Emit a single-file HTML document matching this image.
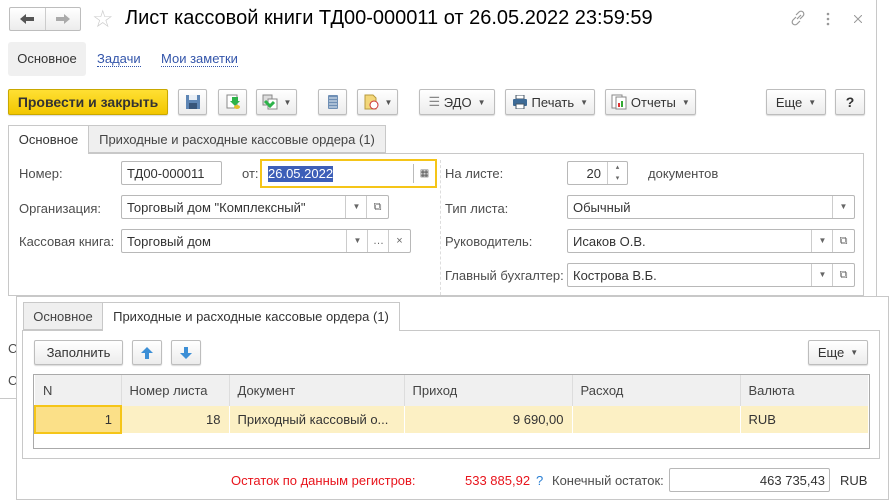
<!DOCTYPE html>
<html><head><meta charset="utf-8"><style>
*{box-sizing:border-box;margin:0;padding:0}
body{width:890px;height:502px;position:relative;overflow:hidden;background:#fff;font-family:"Liberation Sans",sans-serif;font-size:13px;color:#333}
.a{position:absolute}
.btn{position:absolute;height:25px;border:1px solid #bdbdbd;border-radius:2px;background:linear-gradient(#fff,#ececec);box-shadow:0 1px 1px rgba(0,0,0,.15);font-size:13px;color:#333;display:flex;align-items:center;justify-content:center}
.inp{position:absolute;height:24px;border:1px solid #b8b8b8;border-radius:2px;background:#fff;padding-left:5px;line-height:23px;color:#333}
.dd{position:absolute;top:0;width:22px;height:22px;border-left:1px solid #ccc;font-size:8px;color:#666;text-align:center;line-height:22px}
.lbl{position:absolute;color:#4d4d4d}
.car{font-size:8px;margin-left:6px;color:#555}
th,td{font-weight:normal}
</style></head><body>
<div class="a" style="left:0;top:0;width:877px;height:399px;border-right:1px solid #c8c8c8;border-bottom:1px solid #c8c8c8"></div>
<div class="btn" style="left:9px;top:7px;width:72px;height:24px;box-shadow:none;justify-content:flex-start"><span style="width:36px;height:22px;border-right:1px solid #ccc;display:flex;align-items:center;justify-content:center"><svg width="14" height="10"><path d="M0 5L6 0v3h8v4H6v3z" fill="#555"/></svg></span><span style="width:35px;display:flex;align-items:center;justify-content:center"><svg width="14" height="10"><path d="M14 5L8 0v3H0v4h8v3z" fill="#aaa"/></svg></span></div>
<div class="a" style="left:92px;top:5px;font-size:24px;color:#ccc">☆</div>
<div class="a" style="left:125px;top:7px;font-size:20px;color:#000">Лист кассовой книги ТД00-000011 от 26.05.2022 23:59:59</div>
<svg class="a" style="left:790px;top:10px" width="16" height="16"><path d="M7 9l4-4M6 7L3 10a2.5 2.5 0 004 4l3-3M10 9l3-3a2.5 2.5 0 00-4-4L6 5" stroke="#999" stroke-width="1.2" fill="none"/></svg>
<svg class="a" style="left:826px;top:12px" width="4" height="14"><circle cx="2" cy="2" r="1.3" fill="#999"/><circle cx="2" cy="7" r="1.3" fill="#999"/><circle cx="2" cy="12" r="1.3" fill="#999"/></svg>
<svg class="a" style="left:854px;top:15px" width="8" height="8"><path d="M0 0l8 8M8 0L0 8" stroke="#999"/></svg>
<div class="a" style="left:8px;top:42px;width:78px;height:34px;background:#f0f0f0;border-radius:3px;line-height:34px;text-align:center;color:#333">Основное</div>
<div class="a" style="left:97px;top:52px;color:#3355aa;border-bottom:1px dotted #3355aa;line-height:14px">Задачи</div>
<div class="a" style="left:161px;top:52px;color:#3355aa;border-bottom:1px dotted #3355aa;line-height:14px">Мои заметки</div>
<div class="btn" style="left:8px;top:89px;width:160px;height:26px;background:linear-gradient(#ffe033,#f2c600);border-color:#c9a800;font-weight:bold;color:#333;font-size:14px">Провести и закрыть</div>
<div class="btn" style="left:178px;top:89px;width:29px;height:26px"><svg width="16" height="16"><rect x="1" y="1" width="14" height="14" fill="#5e86b5"/><rect x="4" y="1" width="8" height="5" fill="#e8eef5"/><rect x="4" y="9" width="8" height="6" fill="#37557a"/></svg></div>
<div class="btn" style="left:218px;top:89px;width:29px;height:26px"><svg width="16" height="16"><rect x="2" y="1" width="10" height="13" fill="#fff" stroke="#888"/><path d="M7 3h6v4h2l-5 5-5-5h2z" fill="#2db34a"/><ellipse cx="12" cy="13" rx="3" ry="2" fill="#e5c02c"/></svg></div>
<div class="btn" style="left:256px;top:89px;width:41px;height:26px"><svg width="16" height="16"><rect x="1" y="1" width="9" height="10" fill="#ddd" stroke="#888"/><rect x="6" y="5" width="9" height="10" fill="#fff" stroke="#888"/><path d="M3 7l5 5 4-4" stroke="#2db34a" stroke-width="3" fill="none"/></svg><span class="car">▼</span></div>
<div class="btn" style="left:318px;top:89px;width:29px;height:26px"><svg width="12" height="16"><rect x="1" y="1" width="10" height="14" rx="1" fill="#6f8fb5"/><path d="M2 4h8M2 7h8M2 10h8M2 13h8" stroke="#e4ecf5"/></svg></div>
<div class="btn" style="left:357px;top:89px;width:41px;height:26px"><svg width="16" height="16"><path d="M2 1h8l3 3v11H2z" fill="#f3d77a" stroke="#b79a3d"/><circle cx="11" cy="11" r="4" fill="#fff" stroke="#c33"/></svg><span class="car">▼</span></div>
<div class="btn" style="left:419px;top:89px;width:76px;height:26px"><span style="color:#888">☰</span>&nbsp;ЭДО<span class="car">▼</span></div>
<div class="btn" style="left:505px;top:89px;width:90px;height:26px"><svg width="16" height="14"><rect x="4" y="0" width="8" height="4" fill="#fff" stroke="#456"/><rect x="1" y="4" width="14" height="7" rx="1" fill="#3d6a96"/><rect x="4" y="9" width="8" height="5" fill="#fff" stroke="#456"/></svg>&nbsp;Печать<span class="car">▼</span></div>
<div class="btn" style="left:605px;top:89px;width:91px;height:26px"><svg width="16" height="16"><rect x="1" y="1" width="10" height="13" fill="#fff" stroke="#888"/><rect x="5" y="3" width="10" height="12" fill="#fff" stroke="#888"/><rect x="7" y="9" width="2" height="4" fill="#d33"/><rect x="10" y="7" width="2" height="6" fill="#3a3"/></svg>&nbsp;Отчеты<span class="car">▼</span></div>
<div class="btn" style="left:766px;top:89px;width:60px;height:26px">Еще<span class="car">▼</span></div>
<div class="btn" style="left:835px;top:89px;width:30px;height:26px;font-weight:bold;font-size:14px">?</div>
<div class="a" style="left:8px;top:153px;width:856px;height:143px;border:1px solid #c8c8c8"></div>
<div class="a" style="left:8px;top:125px;width:81px;height:29px;border:1px solid #c8c8c8;border-bottom:none;background:#fff;line-height:27px;text-align:center">Основное</div>
<div class="a" style="left:88px;top:125px;width:298px;height:28px;border:1px solid #c8c8c8;background:#efefef;line-height:27px;text-align:center;color:#444">Приходные и расходные кассовые ордера (1)</div>
<div class="lbl" style="left:19px;top:166px">Номер:</div>
<div class="inp" style="left:121px;top:161px;width:101px">ТД00-000011</div>
<div class="lbl" style="left:242px;top:166px">от:</div>
<div class="a" style="left:260px;top:159px;width:177px;height:29px;border:2px solid #f5c518;background:#fff"><span style="position:absolute;left:6px;top:5px;background:#3d5fb8;color:#fff;line-height:16px">26.05.2022</span><div style="position:absolute;right:0;top:3px;width:22px;height:19px;border-left:1px solid #bbb;text-align:center;font-size:10px;line-height:19px;color:#555">▦</div></div>
<div class="lbl" style="left:19px;top:201px">Организация:</div>
<div class="inp" style="left:121px;top:195px;width:268px">Торговый дом "Комплексный"<div class="dd" style="right:21px">▼</div><div class="dd" style="right:0;font-size:11px">⧉</div></div>
<div class="lbl" style="left:19px;top:234px">Кассовая книга:</div>
<div class="inp" style="left:121px;top:229px;width:290px">Торговый дом<div class="dd" style="right:42px">▼</div><div class="dd" style="right:21px;font-size:11px">…</div><div class="dd" style="right:0;font-size:11px">×</div></div>
<div class="a" style="left:440px;top:160px;height:135px;border-left:1px dashed #ddd"></div>
<div class="lbl" style="left:445px;top:166px">На листе:</div>
<div class="inp" style="left:567px;top:161px;width:61px;text-align:right;padding-right:26px">20<div class="dd" style="right:0;width:20px;font-size:7px;line-height:11px">▴<br>▾</div></div>
<div class="lbl" style="left:648px;top:166px">документов</div>
<div class="lbl" style="left:445px;top:201px">Тип листа:</div>
<div class="inp" style="left:567px;top:195px;width:288px">Обычный<div class="dd" style="right:0">▼</div></div>
<div class="lbl" style="left:445px;top:234px">Руководитель:</div>
<div class="inp" style="left:567px;top:229px;width:288px">Исаков О.В.<div class="dd" style="right:21px">▼</div><div class="dd" style="right:0;font-size:11px">⧉</div></div>
<div class="lbl" style="left:445px;top:268px">Главный бухгалтер:</div>
<div class="inp" style="left:567px;top:263px;width:288px">Кострова В.Б.<div class="dd" style="right:21px">▼</div><div class="dd" style="right:0;font-size:11px">⧉</div></div>
<div class="lbl" style="left:8px;top:341px">С</div>
<div class="lbl" style="left:8px;top:373px">С</div>
<div class="a" style="left:16px;top:296px;width:873px;height:204px;border:1px solid #c8c8c8;background:#fff"></div>
<div class="a" style="left:22px;top:330px;width:858px;height:129px;border:1px solid #c8c8c8"></div>
<div class="a" style="left:23px;top:302px;width:80px;height:28px;border:1px solid #c8c8c8;background:#efefef;line-height:27px;text-align:center;color:#444">Основное</div>
<div class="a" style="left:102px;top:302px;width:298px;height:29px;border:1px solid #c8c8c8;border-bottom:none;background:#fff;line-height:27px;text-align:center">Приходные и расходные кассовые ордера (1)</div>
<div class="btn" style="left:34px;top:340px;width:89px">Заполнить</div>
<div class="btn" style="left:132px;top:340px;width:30px"><svg width="12" height="12"><path d="M6 0l6 6H8v6H4V6H0z" fill="#3c8fd6"/></svg></div>
<div class="btn" style="left:171px;top:340px;width:30px"><svg width="12" height="12"><path d="M6 12l6-6H8V0H4v6H0z" fill="#3c8fd6"/></svg></div>
<div class="btn" style="left:808px;top:340px;width:60px">Еще<span class="car">▼</span></div>
<div class="a" style="left:33px;top:374px;width:837px;height:75px;border:1px solid #aaa;background:#fff"></div>
<table class="a" style="left:34px;top:375px;width:835px;border-collapse:collapse;table-layout:fixed;color:#444">
<colgroup><col style="width:86px"><col style="width:108px"><col style="width:175px"><col style="width:168px"><col style="width:168px"><col></colgroup>
<tr style="background:#f0f0f0;height:31px"><th style="text-align:left;padding-left:8px;border-right:1px solid #ddd">N</th><th style="text-align:left;padding-left:8px;border-right:1px solid #ddd">Номер листа</th><th style="text-align:left;padding-left:8px;border-right:1px solid #ddd">Документ</th><th style="text-align:left;padding-left:8px;border-right:1px solid #ddd">Приход</th><th style="text-align:left;padding-left:8px;border-right:1px solid #ddd">Расход</th><th style="text-align:left;padding-left:8px">Валюта</th></tr>
<tr style="background:#fcf0c4;height:27px;color:#333"><td style="text-align:right;padding-right:8px;background:#fbe088;border:2px solid #f5c518">1</td><td style="text-align:right;padding-right:8px;border-right:1px solid #fff">18</td><td style="padding-left:8px;border-right:1px solid #fff;white-space:nowrap;overflow:hidden">Приходный кассовый о...</td><td style="text-align:right;padding-right:8px;border-right:1px solid #fff">9 690,00</td><td style="border-right:1px solid #fff"></td><td style="padding-left:8px">RUB</td></tr>
</table>
<div class="a" style="left:231px;top:473px;color:#e8141c">Остаток по данным регистров:</div>
<div class="a" style="left:465px;top:473px;color:#e8141c">533 885,92</div>
<div class="a" style="left:536px;top:473px;color:#2a7fd4">?</div>
<div class="lbl" style="left:552px;top:473px">Конечный остаток:</div>
<div class="inp" style="left:669px;top:468px;width:161px;text-align:right;padding-right:4px">463 735,43</div>
<div class="a" style="left:840px;top:473px">RUB</div>
</body></html>
